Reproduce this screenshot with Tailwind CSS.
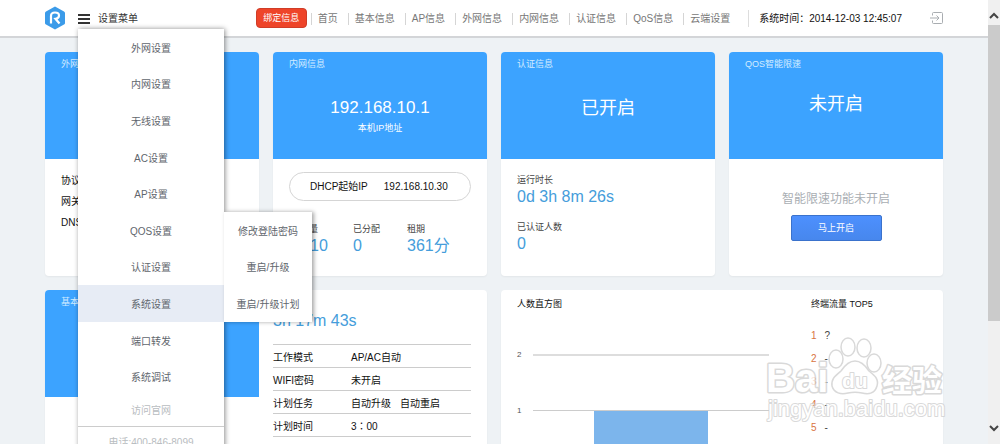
<!DOCTYPE html>
<html lang="zh-CN">
<head>
  <meta charset="UTF-8" />
  <meta name="viewport" content="width=device-width, initial-scale=1.0"/>
  <title>设置菜单</title>
  <script src="https://cdn.jsdelivr.net/npm/@tailwindcss/browser@4"></script>
</head>
<body class="flex h-screen overflow-hidden bg-[#eef2f5] font-['Liberation_Sans','Noto_Sans_CJK_SC',sans-serif] text-[10px] leading-4 text-[#222]">

  <div class="relative h-full min-w-0 flex-1 overflow-hidden">

    <!-- Header -->
    <header class="border-b-2 border-[#d3d5d8] bg-white">
      <div class="relative mx-auto flex h-9 max-w-[898px] items-center">
        <a href="#" aria-label="首页">
          <svg class="h-6 w-5" viewBox="0 0 20 24">
            <path d="M10 0.5 L19 5.5 Q20 6 20 7 V17 Q20 18 19 18.500 L10 23.500 L1 18.500 Q0 18 0 17 V7 Q0 6 1 5.500 Z" fill="#3b9be9"/>
            <path d="M6 17.500 V10 Q6 6.500 10 6.500 Q14 6.500 14 9.500 Q14 12.500 10.500 12.800 L14.500 17.500" fill="none" stroke="#fff" stroke-width="2.200"/>
          </svg>
        </a>
        <button type="button" class="ml-[13px] flex items-center gap-2 pt-px text-[#333]">
          <svg class="h-[10px] w-[12px]" viewBox="0 0 12 10" stroke="#333" stroke-width="1.800">
            <path d="M0 1H12M0 5H12M0 9H12"/>
          </svg>
          设置菜单
        </button>

        <button type="button" class="ml-auto h-5 w-[51px] rounded-sm border border-[#cf3d28] bg-[#ee4429] text-[9px] leading-4 text-white">绑定信息</button>
        <nav class="ml-1 flex pt-0.5 leading-3 text-[#777]">
          <a href="#" class="border-l border-[#d5d5d5] pr-[10px] pl-[6px]">首页</a>
          <a href="#" class="border-l border-[#d5d5d5] pr-[10px] pl-[6px]">基本信息</a>
          <a href="#" class="border-l border-[#d5d5d5] pr-[10px] pl-[6px]">AP信息</a>
          <a href="#" class="border-l border-[#d5d5d5] pr-[10px] pl-[6px]">外网信息</a>
          <a href="#" class="border-l border-[#d5d5d5] pr-[10px] pl-[6px]">内网信息</a>
          <a href="#" class="border-l border-[#d5d5d5] pr-[10px] pl-[6px]">认证信息</a>
          <a href="#" class="border-l border-[#d5d5d5] pr-[10px] pl-[6px]">QoS信息</a>
          <a href="#" class="border-l border-[#d5d5d5] pr-[10px] pl-[6px]">云端设置</a>
        </nav>
        <p class="ml-2 border-l border-[#ddd] pt-px pl-[10px] text-[#111]">系统时间<span class="font-['Noto_Sans_CJK_TC',sans-serif] leading-3">：</span>2014-12-03 12:45:07</p>
        <a href="#" aria-label="退出" class="ml-7">
          <svg class="h-3 w-[13px]" viewBox="0 0 13 12" fill="none" stroke="#a9adb1">
            <path d="M2.500 3.500V1.500Q2.500 .5 3.500 .5H11.500Q12.500 .5 12.500 1.500V10.500Q12.500 11.500 11.500 11.500H3.500Q2.500 11.500 2.500 10.500V8.500M0 6H9M6.500 3.500L9 6L6.500 8.500"/>
          </svg>
        </a>

        <!-- Settings menu -->
        <div class="absolute top-[29px] left-[33px] z-10 w-[146px] bg-white text-center text-[#5f666d] shadow-[1px_0_5px_rgba(0,0,0,0.45)]">
          <ul class="grid h-[366px] grid-rows-10">
            <li class="grid place-items-center pt-[3px]"><a href="#">外网设置</a></li>
            <li class="grid place-items-center pt-[3px]"><a href="#">内网设置</a></li>
            <li class="grid place-items-center pt-[3px]"><a href="#">无线设置</a></li>
            <li class="grid place-items-center pt-[3px]"><a href="#">AC设置</a></li>
            <li class="grid place-items-center pt-[3px]"><a href="#">AP设置</a></li>
            <li class="grid place-items-center pt-[3px]"><a href="#">QOS设置</a></li>
            <li class="grid place-items-center pt-[3px]"><a href="#">认证设置</a></li>
            <li class="relative grid place-items-center bg-[#e7ecf5] pt-[3px]">
              <a href="#">系统设置</a>
              <ul class="absolute bottom-0 left-full grid h-[110px] w-[88px] grid-rows-3 bg-white shadow-[2px_0_4px_rgba(0,0,0,0.35)]">
                <li class="grid place-items-center pt-[3px]"><a href="#">修改登陆密码</a></li>
                <li class="grid place-items-center pt-[3px]"><a href="#">重启/升级</a></li>
                <li class="grid place-items-center pt-[3px]"><a href="#">重启/升级计划</a></li>
              </ul>
            </li>
            <li class="grid place-items-center pt-[3px]"><a href="#">端口转发</a></li>
            <li class="grid place-items-center pt-[3px]"><a href="#">系统调试</a></li>
          </ul>
          <a href="#" class="block border-b border-[#ccc] pt-2 pb-[7px] text-[#b9bdc1]">访问官网</a>
          <p class="py-2 text-[#b9bdc1]">电话:400-846-8099</p>
        </div>
      </div>
    </header>

    <!-- Cards -->
    <main class="mx-auto mt-[14px] grid max-w-[898px] grid-cols-4 gap-[14px]">
      <section class="h-56 overflow-hidden rounded-sm bg-white shadow-xs">
        <div class="h-[107px] bg-[#3ca3ff] px-4 py-1">
          <h2 class="text-[9px] text-[#d3ecff]">外网信息</h2>
        </div>
        <div class="space-y-[5px] px-4 pt-[14px] text-[#111]">
          <p>协议</p>
          <p>网关</p>
          <p>DNS</p>
        </div>
      </section>

      <section class="h-56 overflow-hidden rounded-sm bg-white shadow-xs">
        <div class="h-[107px] bg-[#3ca3ff] px-4 py-1 text-center text-white">
          <h2 class="text-left text-[9px] text-[#d3ecff]">内网信息</h2>
          <p class="mt-6 text-[17px] leading-6">192.168.10.1</p>
          <p class="text-[9px]">本机IP地址</p>
        </div>
        <div class="px-4 pt-[13px]">
          <p class="flex h-[29px] items-center gap-4 rounded-full border border-[#d5d5d5] pl-5 text-[#111]">
            <span>DHCP起始IP</span><span>192.168.10.30</span>
          </p>
          <dl class="mt-5 grid grid-cols-[64px_54px_1fr] text-[9px] text-[#444]">
            <div><dt class="pl-0.5">总数量</dt><dd class="pl-[21px] text-base leading-[18px] text-[#459ddb]">10</dd></div>
            <div><dt>已分配</dt><dd class="text-base leading-[18px] text-[#459ddb]">0</dd></div>
            <div><dt>租期</dt><dd class="text-base leading-[18px] text-[#459ddb]">361分</dd></div>
          </dl>
        </div>
      </section>

      <section class="h-56 overflow-hidden rounded-sm bg-white shadow-xs">
        <div class="h-[107px] bg-[#3ca3ff] px-4 py-1">
          <h2 class="text-[9px] text-[#d3ecff]">认证信息</h2>
          <p class="mt-6 text-center text-lg leading-6 text-white">已开启</p>
        </div>
        <dl class="px-4 pt-[13px] text-[9px] text-[#444]">
          <dt>运行时长</dt>
          <dd class="text-base leading-[18px] text-[#459ddb]">0d 3h 8m 26s</dd>
          <dt class="mt-[13px]">已认证人数</dt>
          <dd class="text-base leading-[18px] text-[#459ddb]">0</dd>
        </dl>
      </section>

      <section class="h-56 overflow-hidden rounded-sm bg-white shadow-xs">
        <div class="h-[107px] bg-[#3ca3ff] px-4 py-1">
          <h2 class="text-[9px] text-[#d3ecff]">QOS智能限速</h2>
          <p class="mt-5 text-center text-lg leading-6 text-white">未开启</p>
        </div>
        <div class="pt-8 text-center">
          <p class="text-xs text-[#a9aeb3]">智能限速功能未开启</p>
          <button type="button" class="mt-2 h-[26px] w-[91px] rounded-xs border border-[#3a72cc] bg-linear-to-b from-[#4d90fe] to-[#4787ed] text-[9px] text-white">马上开启</button>
        </div>
      </section>

      <section class="col-span-2 flex h-56 gap-[14px] overflow-hidden rounded-sm bg-white shadow-xs">
        <div class="w-[214px]">
          <div class="h-[107px] bg-[#3ca3ff] px-4 py-1">
            <h2 class="text-[9px] text-[#d3ecff]">基本信息</h2>
          </div>
        </div>
        <div class="flex-1 pt-[23px] pr-4 text-[#111]">
          <p class="text-base leading-4 text-[#459ddb]">3h 17m 43s</p>
          <table class="mt-[15px] w-full border-y border-[#ccc]">
            <tbody class="divide-y divide-[#ccc]">
              <tr class="h-[23px]"><th class="w-[78px] pt-[3px] text-left font-normal">工作模式</th><td class="pt-[3px]">AP/AC自动</td></tr>
              <tr class="h-[23px]"><th class="pt-[3px] text-left font-normal">WIFI密码</th><td class="pt-[3px]">未开启</td></tr>
              <tr class="h-[23px]"><th class="pt-[3px] text-left font-normal">计划任务</th><td class="pt-[3px]">自动升级<span class="ml-[9px]">自动重启</span></td></tr>
              <tr class="h-[23px]"><th class="pt-[3px] text-left font-normal">计划时间</th><td class="pt-[3px]">3<span class="font-['Noto_Sans_CJK_TC',sans-serif] leading-3">：</span>00</td></tr>
            </tbody>
          </table>
        </div>
      </section>

      <section class="relative col-span-2 grid h-56 grid-cols-[252px_1fr] gap-[42px] rounded-sm bg-white px-4 pt-[6px] shadow-xs">
        <div>
          <h2 class="text-[9px] text-[#111]">人数直方图</h2>
          <div class="mt-[35px] text-[8px] text-[#555]">
            <div class="flex h-14 gap-[12px]">
              <span class="w-1 leading-4">2</span>
              <div class="mt-[7px] flex-1 border-t-2 border-[#ddd]"></div>
            </div>
            <div class="flex h-14 gap-[12px]">
              <span class="w-1 leading-4">1</span>
              <div class="mt-[7px] flex-1 border-t border-[#ccc]">
                <div class="ml-[61px] h-14 w-[114px] bg-[#7cb5ec]"></div>
              </div>
            </div>
          </div>
        </div>
        <div>
          <h2 class="text-[9px] text-[#111]">终端流量 TOP5</h2>
          <ol class="mt-3 leading-6 text-[#444]">
            <li class="flex h-[23px] gap-2"><span class="text-[#d9743f]">1</span>?</li>
            <li class="flex h-[23px] gap-2"><span class="text-[#d9743f]">2</span>-</li>
            <li class="flex h-[23px] gap-2"><span class="text-[#d9743f]">3</span>-</li>
            <li class="flex h-[23px] gap-2"><span class="text-[#d9743f]">4</span>-</li>
            <li class="flex h-[23px] gap-2"><span class="text-[#d9743f]">5</span>-</li>
          </ol>
        </div>

        <!-- Watermark -->
        <svg class="pointer-events-none absolute top-[44px] -right-1 h-[92px] w-[184px] opacity-80" viewBox="0 0 184 92" fill="#fff" stroke="#d0d0d0" stroke-linejoin="round">
          <text x="3" y="58" font-size="40" font-weight="bold" stroke-width="3" paint-order="stroke">Bai</text>
          <g stroke-width="1.500">
            <path d="M92 27C98 27 102 31 106 37C112 42 116 45 114 52C112 59 106 61 99 59C94 58 90 58 85 59C78 61 71 59 69 52C68 45 72 42 78 37C82 31 86 27 92 27Z"/>
            <ellipse cx="73" cy="25" rx="7" ry="9"/>
            <ellipse cx="85" cy="13" rx="7" ry="9"/>
            <ellipse cx="101" cy="14" rx="7" ry="9"/>
            <ellipse cx="111" cy="29" rx="7" ry="9"/>
          </g>
          <text x="79" y="54" font-size="21" font-weight="bold" stroke-width="2" paint-order="stroke">du</text>
          <text x="119" y="57" font-size="30" font-weight="bold" stroke-width="3" paint-order="stroke">经验</text>
          <text x="5" y="82" font-size="22" stroke-width="2" paint-order="stroke">jingyan.baidu.com</text>
        </svg>
      </section>
    </main>
  </div>

  <!-- Scrollbar -->
  <div class="flex h-full w-3 flex-col items-center justify-between bg-[#f0f0f0]" aria-hidden="true">
    <div class="flex h-[321px] w-full flex-col">
      <svg class="mt-3 h-[13px] w-full" viewBox="0 0 12 13" fill="none" stroke="#444" stroke-width="2"><path d="M2 6L6 2L10 6"/></svg>
      <div class="flex-1 bg-[#cbcbcb]"></div>
    </div>
    <svg class="mb-3 h-2 w-full" viewBox="0 0 12 8" fill="none" stroke="#444" stroke-width="2"><path d="M2 2L6 6L10 2"/></svg>
  </div>

</body>
</html>
